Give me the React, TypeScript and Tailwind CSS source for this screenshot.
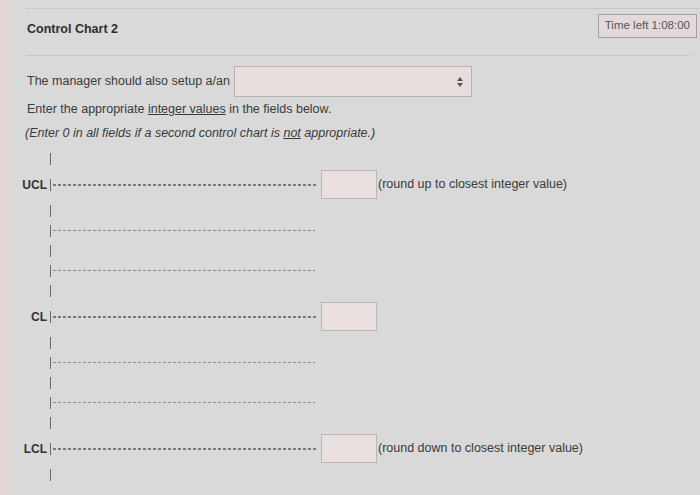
import React from 'react';

const font = { fontFamily: '"Liberation Sans", Arial, sans-serif' };

function Tick() {
  return <span className="block w-px h-[12px] bg-[#6b6b6b]" />;
}

function Spacer() {
  return (
    <div className="flex items-center h-[20px]">
      <div className="w-[38px]" />
      <Tick />
    </div>
  );
}

function Gridline() {
  return (
    <div className="flex items-center h-[20px]">
      <div className="w-[38px]" />
      <Tick />
      <div className="ml-[2px] w-[262px] h-px bg-[repeating-linear-gradient(90deg,#8a8a8a_0_3px,transparent_3px_5px)]" />
    </div>
  );
}

function LimitRow({ label, note }: { label: string; note?: string }) {
  return (
    <div className="flex items-center h-[32px]">
      <div className="w-[38px] text-right pr-[3px] text-[12px] font-bold text-[#333]">{label}</div>
      <Tick />
      <div className="ml-[2px] w-[265px] h-[2px] bg-[repeating-linear-gradient(90deg,#7a7a7a_0_3px,transparent_3px_5px)]" />
      <input className="ml-[3px] w-[56px] h-[29px] bg-[#e9dfdf] border border-[#bdb5b5] outline-none" />
      {note && <span className="ml-[1px] text-[12.5px] text-[#3a3a3a]">{note}</span>}
    </div>
  );
}

export default function App() {
  return (
    <div className="w-[700px] h-[495px] overflow-hidden bg-[#d9d9d9] flex" style={font}>
      <div className="w-[12px] h-full bg-gradient-to-r from-[#e8d6d6] to-[#dcd6d6]" />
      <div className="flex-1 flex flex-col">
        <div className="mt-[8px] ml-[13px] border-t border-[#c8c8c8]" />

        <div className="flex items-start justify-between h-[46px] pl-[15px] pr-[3px]">
          <div className="mt-[11px] text-[12.5px] font-bold text-[#2f2f2f]">Control Chart 2</div>
          <div className="mt-[5px] h-[24px] px-[6px] flex items-center bg-[#e2dada] border border-[#a89c9c] text-[11.5px] text-[#555]">
            Time left 1:08:00
          </div>
        </div>

        <div className="ml-[13px] mr-[10px] border-t border-[#c6c6c6]" />

        <div className="pl-[15px] mt-[10px] flex items-center gap-[4px] text-[12.5px] text-[#3a3a3a]">
          <span>The manager should also setup a/an</span>
          <div className="w-[238px] h-[31px] bg-[#e8dddd] border border-[#b7b0b0] flex items-center justify-end pr-[8px]">
            <svg width="6" height="10" viewBox="0 0 6 10" fill="#555">
              <path d="M3 0L6 4H0z" />
              <path d="M3 10L0 6H6z" />
            </svg>
          </div>
        </div>

        <div className="pl-[15px] mt-[3px] text-[12.5px] text-[#3a3a3a]">
          Enter the appropriate <span className="underline">integer values</span> in the fields below.
        </div>
        <div className="pl-[13px] mt-[5px] text-[12.5px] italic text-[#3a3a3a]">
          (Enter 0 in all fields if a second control chart is <span className="underline">not</span> appropriate.)
        </div>

        <div className="mt-[6px] flex flex-col">
          <Spacer />
          <LimitRow label="UCL" note="(round up to closest integer value)" />
          <Spacer />
          <Gridline />
          <Spacer />
          <Gridline />
          <Spacer />
          <LimitRow label="CL" />
          <Spacer />
          <Gridline />
          <Spacer />
          <Gridline />
          <Spacer />
          <LimitRow label="LCL" note="(round down to closest integer value)" />
          <Spacer />
        </div>
      </div>
    </div>
  );
}
